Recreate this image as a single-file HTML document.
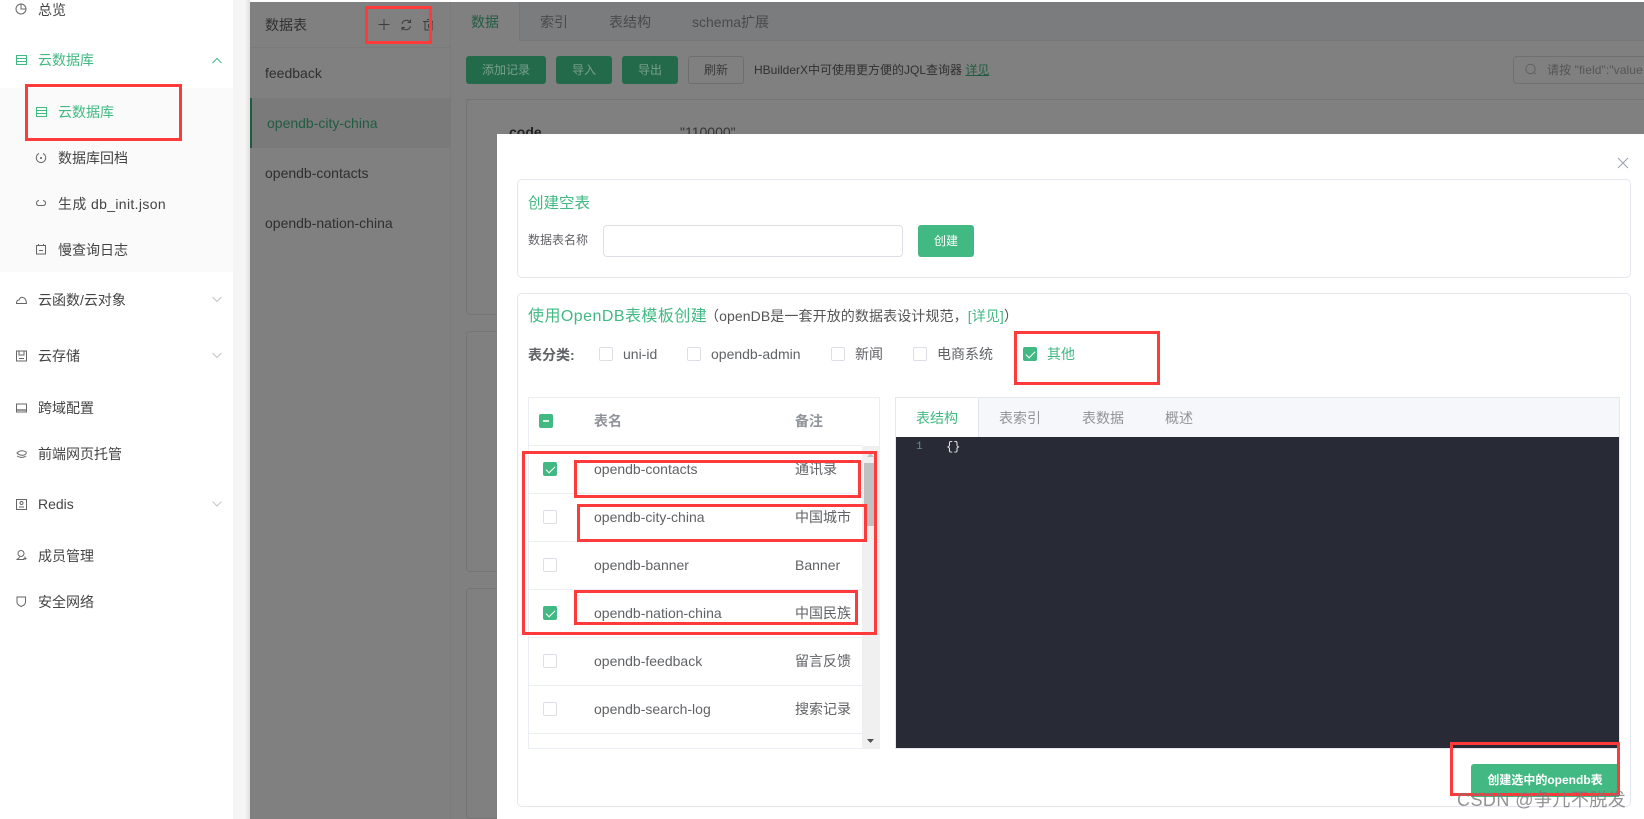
<!DOCTYPE html>
<html><head><meta charset="utf-8">
<style>
*{box-sizing:border-box}
html,body{margin:0;padding:0;width:1644px;height:819px;overflow:hidden;background:#fff;font-family:"Liberation Sans","Noto Sans CJK SC",sans-serif;font-size:14px;color:#333}
.a{position:absolute;white-space:nowrap}
.t{position:absolute;white-space:nowrap;line-height:20px;height:20px}
.r{position:absolute;border:3px solid #ff3a3a;z-index:50}
svg{position:absolute;fill:none;overflow:visible}
.cb{position:absolute;width:14px;height:14px;border:1px solid #dcdfe6;border-radius:2px;background:#fff}
.cb.on{background:#42b983;border-color:#42b983}
.cb.on:after{content:"";position:absolute;left:4px;top:1px;width:4px;height:8px;border:solid #fff;border-width:0 1px 1px 0;transform:rotate(45deg)}
.line{position:absolute;height:1px;background:#ebeef5}
.dim{color:#2f2f2f}
</style></head><body>

<!-- sidebar -->
<div class="a" style="left:0;top:88px;width:233px;height:184px;background:#fafafa"></div>
<div class="a" style="left:233px;top:0;width:17px;height:819px;background:linear-gradient(90deg,#f5f5f5 0,#f5f5f5 12px,#e0e0e0 100%)"></div>

<div class="t" style="left:38px;top:0;color:#444">总览</div>
<div class="t" style="left:38px;top:50px;color:#42b983">云数据库</div>
<div class="t" style="left:58px;top:102px;color:#42b983">云数据库</div>
<div class="t" style="left:58px;top:148px;color:#444">数据库回档</div>
<div class="t" style="left:58px;top:194px;color:#444;letter-spacing:.35px">生成 db_init.json</div>
<div class="t" style="left:58px;top:240px;color:#444">慢查询日志</div>
<div class="t" style="left:38px;top:290px;color:#444">云函数/云对象</div>
<div class="t" style="left:38px;top:346px;color:#444">云存储</div>
<div class="t" style="left:38px;top:398px;color:#444">跨域配置</div>
<div class="t" style="left:38px;top:444px;color:#444">前端网页托管</div>
<div class="t" style="left:38px;top:494px;color:#444">Redis</div>
<div class="t" style="left:38px;top:546px;color:#444">成员管理</div>
<div class="t" style="left:38px;top:592px;color:#444">安全网络</div>

<!-- sidebar icons -->
<svg style="left:0;top:0" width="233" height="640" stroke="#666" stroke-width="1">
 <circle cx="21" cy="9" r="5"/><path d="M21 4.500V9H25.500"/>
 <g stroke="#42b983"><rect x="16.500" y="55.500" width="10" height="9"/><path d="M16.500 58.500H26.500M16.500 61.500H26.500"/>
 <rect x="36.500" y="107.500" width="10" height="9"/><path d="M36.500 110.500H46.500M36.500 113.500H46.500"/>
 <path d="M212.500 63L217 58.500L221.500 63"/></g>
 <path d="M39 153.500A4.700 4.700 0 1 0 43 153.500"/><circle cx="41" cy="158" r="1" fill="#555" stroke="none"/>
 <path d="M39 200.500Q36.500 201 36.500 203Q36.500 205.500 39 205.500H43Q45.500 205.500 45.500 203Q45.500 201 43 200.500"/>
 <rect x="36.500" y="245.500" width="9" height="8.500"/><path d="M39 250.500H43M38.500 244V246M43.500 244V246"/>
 <path d="M16.500 303.500Q16.500 300 19 300Q20.500 296.500 23 297.500Q26 298 26.500 303.500Z"/><path d="M16 303.500H27"/>
 <rect x="16.500" y="351" width="10" height="10"/><path d="M19 351V355H24V351M19 358.500H24"/>
 <rect x="16.500" y="404" width="10" height="8"/><path d="M17 410H26" stroke-width="2" stroke="#999"/>
 <path d="M17 453Q21 449 26 452Q27 454 24 455Q20 456 17 453ZM17 456Q22 459 26 456"/>
 <rect x="16.500" y="499.500" width="10" height="10"/><circle cx="21.500" cy="503" r="1.500"/><path d="M19 507H24"/>
 <circle cx="21" cy="553.500" r="3"/><path d="M19.500 557Q19 558.500 16.500 559.500H24M25 556.500V560M23.500 558.500H26.500"/>
 <path d="M17 597H25.500V602.500Q25 605 21.200 606.500Q17.500 605 17 602.500Z"/>
 <g stroke="#c4c4c4"><path d="M212.500 297L217 301.500L221.500 297M212.500 353L217 357.500L221.500 353M212.500 501.500L217 506L221.500 501.500"/></g>
</svg>

<!-- main (dimmed) -->
<div class="a" style="left:250px;top:2px;width:1394px;height:817px;background:#808080"></div>
<div class="a" style="left:450px;top:2px;width:1194px;height:39px;background:#7b7c7e;border-bottom:1px solid #757678"></div>
<div class="a" style="left:450px;top:2px;width:70px;height:39px;background:#808080;border-right:1px solid #757678"></div>
<div class="a" style="left:450px;top:2px;width:1px;height:817px;background:#7a7a7a"></div>
<div class="a" style="left:250px;top:47px;width:200px;height:1px;background:#7a7a7a"></div>
<div class="a" style="left:250px;top:98px;width:200px;height:50px;background:#7a7a7a;border-left:2px solid #215c42"></div>

<div class="t dim" style="left:265px;top:15px;font-size:14px">数据表</div>
<svg style="left:0;top:0" width="450" height="40" stroke="#3c3c3c" stroke-width="1">
 <path d="M384 19V30M378.500 24.500H389.500"/>
 <path d="M402 24A4.500 4.500 0 0 1 410 22M410.500 19.500V22.500H407.500M410.500 26A4.500 4.500 0 0 1 402.500 28M402 30.500V27.500H405"/>
 <path d="M423 21.500H433M425 21.500V30H432V21.500M427 19.500H430M428.500 24V28"/>
</svg>
<div class="t dim" style="left:265px;top:63px">feedback</div>
<div class="t" style="left:267px;top:113px;color:#215c42">opendb-city-china</div>
<div class="t dim" style="left:265px;top:163px">opendb-contacts</div>
<div class="t dim" style="left:265px;top:213px">opendb-nation-china</div>

<div class="t" style="left:471px;top:12px;color:#215c42">数据</div>
<div class="t" style="left:540px;top:12px;color:#4a4a4a">索引</div>
<div class="t" style="left:609px;top:12px;color:#4a4a4a">表结构</div>
<div class="t" style="left:692px;top:12px;color:#4a4a4a">schema扩展</div>

<div class="a" style="left:466px;top:56px;width:80px;height:28px;background:#236a4b;border-radius:3px;color:#7a9f8d;font-size:12px;line-height:28px;text-align:center">添加记录</div>
<div class="a" style="left:556px;top:56px;width:56px;height:28px;background:#236a4b;border-radius:3px;color:#7a9f8d;font-size:12px;line-height:28px;text-align:center">导入</div>
<div class="a" style="left:622px;top:56px;width:56px;height:28px;background:#236a4b;border-radius:3px;color:#7a9f8d;font-size:12px;line-height:28px;text-align:center">导出</div>
<div class="a" style="left:688px;top:56px;width:56px;height:28px;border:1px solid #6e6e6e;border-radius:3px;color:#3a3a3a;font-size:12px;line-height:26px;text-align:center">刷新</div>
<div class="t" style="left:754px;top:60px;font-size:12px;color:#303030">HBuilderX中可使用更方便的JQL查询器 <span style="color:#215c42;text-decoration:underline">详见</span></div>
<div class="a" style="left:1513px;top:56px;width:170px;height:28px;border:1px solid #707070;border-radius:4px"></div>
<svg style="left:1523px;top:62px" width="16" height="16" stroke="#606060" stroke-width="1"><circle cx="7.500" cy="7" r="4.700"/><path d="M11 10.500L12.500 12"/></svg>
<div class="t" style="left:1547px;top:60px;font-size:12px;letter-spacing:.1px;color:#555">请按 "field":"value</div>

<div class="a" style="left:466px;top:99px;width:1178px;height:1px;background:#757575"></div>
<div class="a" style="left:466px;top:99px;width:1300px;height:216px;border:1px solid #757575;border-radius:4px"></div>
<div class="a" style="left:466px;top:331px;width:1300px;height:241px;border:1px solid #757575;border-radius:4px"></div>
<div class="a" style="left:466px;top:588px;width:1300px;height:231px;border:1px solid #757575;border-radius:4px"></div>
<div class="t" style="left:509px;top:122px;font-weight:bold;color:#222">code</div>
<div class="t" style="left:680px;top:122px;color:#333">"110000"</div>

<!-- modal -->
<div class="a" style="left:497px;top:134px;width:1147px;height:685px;background:#fff"></div>
<svg style="left:1617px;top:157px" width="12" height="12" stroke="#9aa0aa" stroke-width="1"><path d="M1 1L11 11M11 1L1 11"/></svg>

<div class="a" style="left:517px;top:179px;width:1114px;height:99px;border:1px solid #e4e7ed;border-radius:5px"></div>
<div class="t" style="left:528px;top:194px;font-size:15.500px;color:#42b983">创建空表</div>
<div class="t" style="left:528px;top:230px;font-size:12px;color:#606266">数据表名称</div>
<div class="a" style="left:603px;top:225px;width:300px;height:32px;border:1px solid #dcdfe6;border-radius:4px"></div>
<div class="a" style="left:918px;top:225px;width:56px;height:32px;background:#42b983;border-radius:3px;color:#fff;font-size:12px;line-height:32px;text-align:center">创建</div>

<div class="a" style="left:517px;top:293px;width:1114px;height:514px;border:1px solid #e4e7ed;border-radius:5px"></div>
<div class="t" style="left:528px;top:307px;font-size:16px;letter-spacing:.45px;color:#42b983">使用OpenDB表模板创建</div>
<div class="t" style="left:705px;top:306px;font-size:14px;letter-spacing:.1px;color:#555">（openDB是一套开放的数据表设计规范，<span style="color:#42b983">[详见]</span>）</div>

<div class="t" style="left:528px;top:345px;font-size:14px;font-weight:bold;color:#606266">表分类:</div>
<div class="cb" style="left:599px;top:347px"></div>
<div class="t" style="left:623px;top:344px;color:#606266">uni-id</div>
<div class="cb" style="left:687px;top:347px"></div>
<div class="t" style="left:711px;top:344px;color:#606266">opendb-admin</div>
<div class="cb" style="left:831px;top:347px"></div>
<div class="t" style="left:855px;top:344px;color:#606266">新闻</div>
<div class="cb" style="left:913px;top:347px"></div>
<div class="t" style="left:937px;top:344px;color:#606266">电商系统</div>
<div class="cb on" style="left:1023px;top:347px"></div>
<div class="t" style="left:1047px;top:344px;color:#42b983">其他</div>

<!-- table -->
<div class="a" style="left:528px;top:397px;width:352px;height:352px;border:1px solid #ebeef5"></div>
<div class="line" style="left:528px;top:445px;width:334px"></div>
<div class="line" style="left:528px;top:493px;width:334px"></div>
<div class="line" style="left:528px;top:541px;width:334px"></div>
<div class="line" style="left:528px;top:589px;width:334px"></div>
<div class="line" style="left:528px;top:637px;width:334px"></div>
<div class="line" style="left:528px;top:685px;width:334px"></div>
<div class="line" style="left:528px;top:733px;width:334px"></div>
<div class="a" style="left:862px;top:446px;width:18px;height:303px;background:#f0f0f1"></div>
<div class="a" style="left:864px;top:463px;width:10px;height:63px;background:#c1c1c1"></div>
<svg style="left:866px;top:452px" width="10" height="6"><path d="M1 5L4.500 1L8 5Z" fill="#c1c1c1"/></svg>
<svg style="left:866px;top:738px" width="10" height="6"><path d="M1 1L4.500 5L8 1Z" fill="#505050"/></svg>

<div class="a" style="left:539px;top:414px;width:14px;height:14px;background:#42b983;border-radius:2px"></div>
<div class="a" style="left:543px;top:420px;width:6px;height:2px;background:#d9f1e6"></div>
<div class="t" style="left:594px;top:411px;color:#909399;font-weight:bold;font-size:14px">表名</div>
<div class="t" style="left:795px;top:411px;color:#909399;font-weight:bold;font-size:14px">备注</div>

<div class="cb on" style="left:543px;top:462px"></div>
<div class="cb" style="left:543px;top:510px"></div>
<div class="cb" style="left:543px;top:558px"></div>
<div class="cb on" style="left:543px;top:606px"></div>
<div class="cb" style="left:543px;top:654px"></div>
<div class="cb" style="left:543px;top:702px"></div>

<div class="t" style="left:594px;top:459px;color:#606266">opendb-contacts</div><div class="t" style="left:795px;top:459px;color:#606266">通讯录</div>
<div class="t" style="left:594px;top:507px;color:#606266">opendb-city-china</div><div class="t" style="left:795px;top:507px;color:#606266">中国城市</div>
<div class="t" style="left:594px;top:555px;color:#606266">opendb-banner</div><div class="t" style="left:795px;top:555px;color:#606266">Banner</div>
<div class="t" style="left:594px;top:603px;color:#606266">opendb-nation-china</div><div class="t" style="left:795px;top:603px;color:#606266">中国民族</div>
<div class="t" style="left:594px;top:651px;color:#606266">opendb-feedback</div><div class="t" style="left:795px;top:651px;color:#606266">留言反馈</div>
<div class="t" style="left:594px;top:699px;color:#606266">opendb-search-log</div><div class="t" style="left:795px;top:699px;color:#606266">搜索记录</div>

<!-- right panel -->
<div class="a" style="left:895px;top:397px;width:725px;height:352px;border:1px solid #e4e7ed;background:#282a35"></div>
<div class="a" style="left:896px;top:398px;width:723px;height:39px;background:#f5f7fa"></div>
<div class="a" style="left:896px;top:398px;width:83px;height:39px;background:#fff;border-right:1px solid #e4e7ed"></div>
<div class="t" style="left:916px;top:408px;color:#42b983">表结构</div>
<div class="t" style="left:999px;top:408px;color:#909399">表索引</div>
<div class="t" style="left:1082px;top:408px;color:#909399">表数据</div>
<div class="t" style="left:1165px;top:408px;color:#909399">概述</div>
<div class="t" style="left:916px;top:437px;font-size:11px;color:#6d8a88;font-family:'Liberation Mono',monospace">1</div>
<div class="t" style="left:946px;top:437px;font-size:12px;color:#e8e8e8;font-family:'Liberation Mono',monospace">{}</div>

<div class="a" style="left:1471px;top:764px;width:148px;height:33px;background:#42b983;border-radius:3px 0 0 0;color:#fff;font-size:12px;font-weight:bold;line-height:32px;text-align:center">创建选中的opendb表</div>

<!-- red rects -->
<div class="r" style="left:365px;top:6px;width:67px;height:38px"></div>
<div class="r" style="left:25px;top:84px;width:157px;height:57px"></div>
<div class="r" style="left:1014px;top:331px;width:146px;height:54px"></div>
<div class="r" style="left:522px;top:451px;width:355px;height:184px"></div>
<div class="r" style="left:574px;top:460px;width:287px;height:38px"></div>
<div class="r" style="left:577px;top:504px;width:290px;height:38px"></div>
<div class="r" style="left:574px;top:590px;width:284px;height:35px"></div>
<div class="r" style="left:1450px;top:742px;width:170px;height:54px"></div>

<div class="t" style="left:1457px;top:790px;font-size:18px;letter-spacing:.45px;color:rgba(120,120,120,.8);z-index:60">CSDN @争儿不脱发</div>
</body></html>
